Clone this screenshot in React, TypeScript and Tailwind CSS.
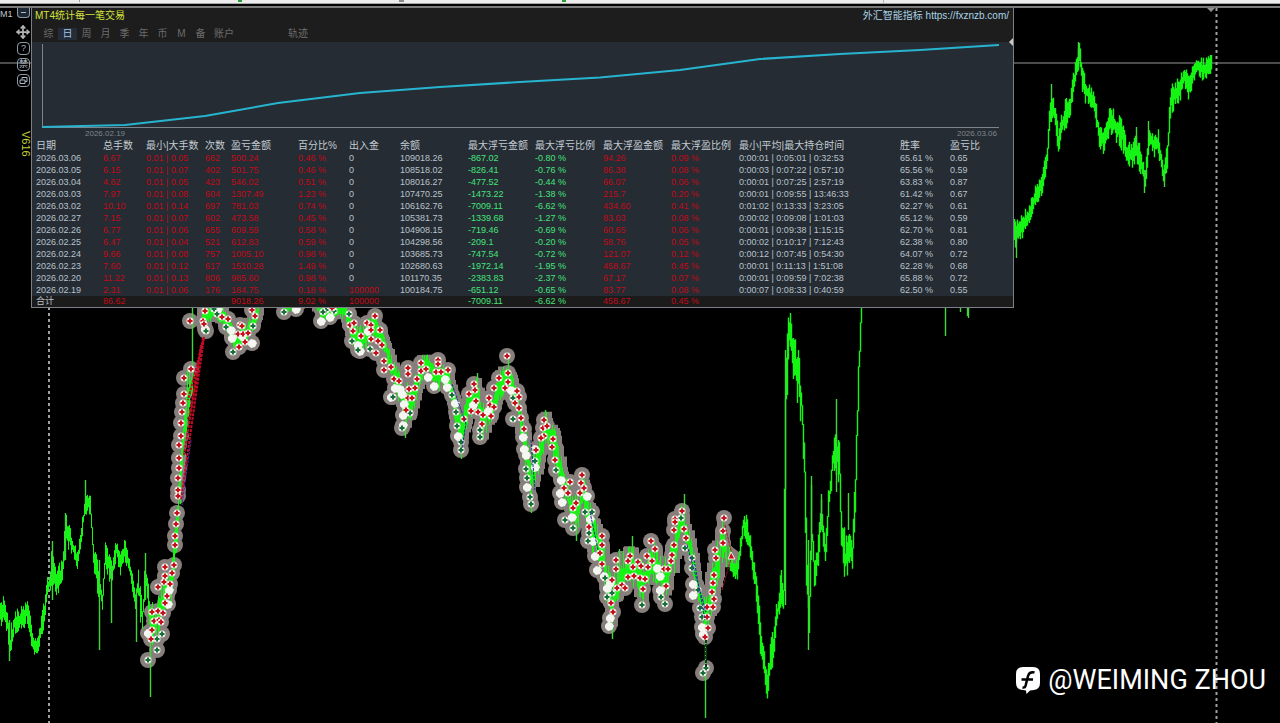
import { Move } from 'lucide-react';
import { useState } from 'react';

// x, top, bottom of the price range
type Band = [number, number, number];

const leftBand: Band[] = [
  [0, 606, 624], [4, 590, 626], [7, 612, 632], [10, 628, 660], [14, 610, 635], [20, 610, 628], [27, 598, 622],
  [31, 620, 645], [34, 638, 655], [38, 634, 650], [42, 612, 635], [46, 583, 605], [50, 565, 590], [52, 543, 582],
  [57, 568, 598], [62, 562, 590], [65, 514, 545], [70, 530, 547], [77, 553, 568], [82, 518, 535], [85, 492, 512],
  [90, 495, 512], [93, 545, 562], [98, 560, 602], [102, 590, 606], [105, 545, 562], [111, 560, 588], [116, 542, 556],
  [120, 556, 572], [124, 540, 555], [130, 562, 578], [135, 590, 612], [138, 565, 600], [142, 600, 640],
  [145, 556, 582], [150, 585, 650], [155, 610, 640], [164, 575, 610], [172, 560, 600], [177, 480, 545],
  [181, 420, 490], [187, 370, 420], [193, 362, 385],
];

const midBand: Band[] = [
  [202, 309, 325], [214, 306, 314], [226, 312, 328], [234, 330, 348], [246, 325, 342], [256, 307, 322], [262, 290, 295],
  [276, 290, 295], [284, 300, 309], [298, 300, 307], [306, 290, 295], [314, 295, 300], [320, 304, 317], [333, 304, 315],
  [345, 304, 316], [352, 320, 345], [362, 330, 348], [372, 312, 337], [382, 322, 348], [390, 355, 370], [398, 372, 398],
  [405, 382, 430], [412, 390, 413], [419, 360, 385], [426, 355, 370], [436, 362, 386], [448, 368, 390],
  [455, 395, 422], [461, 418, 453], [468, 392, 418], [477, 378, 408], [482, 400, 438], [489, 402, 423], [500, 372, 400],
  [507, 364, 390], [516, 388, 408], [523, 420, 448], [531, 455, 504], [538, 440, 472], [546, 414, 438],
  [553, 425, 458], [562, 460, 497], [569, 485, 520], [576, 500, 530], [583, 477, 508], [590, 505, 547],
  [601, 535, 568], [612, 580, 626], [619, 557, 597], [632, 547, 582], [643, 565, 600], [652, 540, 576], [663, 565, 600],
  [674, 530, 570], [681, 506, 525], [690, 535, 558], [697, 570, 598], [705, 600, 637], [714, 555, 606], [722, 518, 560],
  [727, 545, 570],
];

const rightBand: Band[] = [
  [729, 548, 566], [733, 560, 578], [737, 560, 576], [740, 540, 556], [743, 515, 532], [747, 516, 545], [751, 545, 560],
  [756, 572, 600], [760, 612, 655], [764, 645, 682], [767, 668, 700], [770, 645, 680], [774, 620, 650], [778, 590, 622],
  [781, 572, 600], [783, 582, 612], [785, 355, 460], [789, 309, 360], [793, 335, 380], [798, 350, 405], [801, 372, 425],
  [804, 440, 485], [806, 510, 600], [809, 575, 640], [811, 480, 560], [814, 560, 585], [817, 540, 580], [821, 495, 522],
  [825, 545, 564], [828, 492, 525], [832, 448, 475], [835, 436, 466], [839, 440, 486], [841, 510, 550], [845, 535, 588],
  [849, 535, 560], [852, 535, 566], [855, 475, 510], [857, 390, 450], [859, 320, 390], [861, 300, 322], [862, 300, 322],
];

const farBand: Band[] = [
  [1014, 222, 248], [1020, 215, 238], [1028, 208, 225], [1035, 188, 203], [1042, 173, 192], [1047, 140, 165],
  [1050, 88, 125], [1053, 98, 115], [1058, 128, 150], [1064, 104, 130], [1070, 92, 114], [1075, 65, 88], [1079, 44, 62],
  [1083, 72, 97], [1089, 85, 106], [1094, 93, 110], [1098, 116, 144], [1103, 130, 152], [1109, 108, 132],
  [1115, 112, 138], [1122, 122, 148], [1127, 143, 165], [1132, 146, 165], [1136, 132, 158], [1141, 155, 174],
  [1145, 165, 190], [1149, 125, 150], [1154, 136, 154], [1158, 130, 152], [1163, 165, 182], [1167, 140, 168],
  [1170, 88, 116], [1175, 84, 102], [1180, 73, 98], [1184, 68, 82], [1188, 76, 98], [1192, 62, 84], [1196, 58, 71],
  [1203, 60, 78], [1212, 57, 68],
];

// single long wicks
const wicks: Band[] = [
  [9, 620, 661], [52, 541, 600], [65, 513, 560], [85, 480, 510], [99, 560, 650], [111, 565, 623], [136, 590, 642],
  [145, 553, 600], [150, 640, 697], [192, 307, 372], [405, 400, 438], [477, 373, 400], [461, 440, 459], [508, 355, 380],
  [545, 410, 430], [531, 490, 513], [576, 510, 541], [612, 600, 639], [632, 536, 560], [619, 549, 580], [684, 494, 520],
  [705, 630, 718], [785, 350, 605], [808, 540, 650], [811, 476, 560], [836, 399, 492], [821, 494, 530], [848, 493, 530],
  [945, 307, 336], [960, 307, 312], [967, 307, 316], [968, 307, 318], [1016, 230, 258], [1051, 84, 100], [1078, 42, 60],
  [1144, 170, 193], [1164, 170, 187], [1148, 121, 140], [1136, 127, 150],
];

function bandPath(band: Band[]) {
  let seed = 7;
  const rnd = () => {
    seed = (seed * 16807) % 2147483647;
    return seed / 2147483647;
  };
  let d = '';
  let prev = [band[0][1], band[0][2]];
  for (let i = 0; i < band.length - 1; i++) {
    const [x1, t1, b1] = band[i];
    const [x2, t2, b2] = band[i + 1];
    for (let x = x1; x < x2; x++) {
      const k = (x - x1) / (x2 - x1);
      const top = t1 + (t2 - t1) * k;
      const bot = b1 + (b2 - b1) * k;
      const h = bot - top;
      let hi = top - 3 + rnd() * h * 0.5;
      let lo = bot + 3 - rnd() * h * 0.5;
      // keep neighbouring bars joined
      if (hi > prev[1]) hi = prev[1];
      if (lo < prev[0]) lo = prev[0];
      prev = [hi, lo];
      d += `M${x + 0.5} ${hi.toFixed(1)}V${(lo + 1).toFixed(1)}`;
    }
  }
  return d;
}

const buys = `190,321 191,369 184,378 184,394 183,403 182,412 181,423 181,436 179,445 179,458 179,468 178,478 178,490 178,496
177,513 176,524 175,536 175,545 165,567 174,565 165,576 172,573 158,587 164,582 170,584 167,596 165,603 152,612 158,611
163,613 154,621 159,620 161,622 152,630 151,639 203,321 204,324 222,317 228,319 239,347 245,342 238,334 243,334 240,325
242,326 248,333 255,316 252,310 205,311 332,308 350,325 354,323 353,331 361,336 367,323 371,325 375,316 371,330 380,330
378,341 371,339 382,345 376,353 384,361 391,367 384,370 394,379 399,381 409,389 415,388 408,398 412,398 408,368 408,374
417,379 406,410 421,363 421,371 426,369 438,360 438,364 436,372 441,372 448,370 464,419 474,384 469,394 475,390 476,401
471,411 478,412 483,415 482,424 494,388 489,398 490,405 494,407 491,416 499,378 507,356 508,373 508,382 505,388 517,391
519,397 515,403 519,408 521,418 524,429 536,450 544,420 543,428 547,426 544,436 541,438 553,439 552,447 555,460 564,488
570,482 568,493 576,503 573,508 582,475 581,483 584,488 580,493 589,527 602,536 602,545 600,553 602,564 616,560 616,569
612,580 617,588 611,603 613,612 630,556 628,561 633,567 628,577 622,585 625,588 638,562 641,566 634,576 640,578 645,579
643,589 651,541 655,549 647,556 652,561 648,567 664,569 668,569 666,586 674,545 672,555 671,561 675,519 675,522 674,530
682,511 684,529 686,538 707,617 708,628 705,637 715,550 716,558 714,575 713,583 712,592 714,599 707,607 713,607 724,518
723,531 723,543`;

const sells = `162,634 157,639 157,650 148,660 206,331 217,314 226,327 233,352 253,326 214,309 284,312 326,310 334,311
323,312 349,314 352,341 358,350 370,349 393,397 410,413 402,428 452,395 456,412 457,426 461,442 461,450 480,430 480,437
513,398 513,419 535,461 526,469 527,478 530,497 531,504 556,470 565,520 573,528 585,512 592,512 589,533 588,541 605,578
612,593 607,597 642,605 661,597 665,604 681,518 685,548 692,558 692,568 698,590 700,608 702,617 706,668 703,673`;

const closed = `169,590 168,604 148,633 205,329 231,330 232,338 252,343 218,309 296,309 321,321 330,317 358,345 360,351 395,388
391,397 402,394 403,415 403,425 428,377 434,386 445,379 447,387 455,403 458,436 473,405 511,390 523,437 524,449 526,455
535,449 535,467 527,487 561,480 560,493 562,502 572,517 587,496 590,519 593,541 595,556 597,570 604,576 610,583 607,588
610,618 609,626 657,568 660,576 660,590 693,584 693,595 702,627 703,634 404,404 488,411 368,331 400,389 242,336`;

const points = (s: string) => s.split(/\s+/).map(p => p.split(',').map(Number));
const buyPts = points(buys);
const sellPts = points(sells);
const closedPts = points(closed);

const tabs = ['综', '日', '周', '月', '季', '年', '币', 'M', '备'];

const columns = ['日期', '总手数', '最小|大手数', '次数', '盈亏金额', '百分比%', '出入金', '余额', '最大浮亏金额', '最大浮亏比例', '最大浮盈金额', '最大浮盈比例', '最小|平均|最大持仓时间', '胜率', '盈亏比'];

const rows = [
  ['2026.03.06', '6.67', '0.01 | 0.05', '662', '500.24', '0.46 %', '0', '109018.26', '-867.02', '-0.80 %', '94.26', '0.09 %', '0:00:01 | 0:05:01 | 0:32:53', '65.61 %', '0.65'],
  ['2026.03.05', '6.15', '0.01 | 0.07', '402', '501.75', '0.46 %', '0', '108518.02', '-826.41', '-0.76 %', '86.38', '0.08 %', '0:00:03 | 0:07:22 | 0:57:10', '65.56 %', '0.59'],
  ['2026.03.04', '4.62', '0.01 | 0.05', '423', '546.02', '0.51 %', '0', '108016.27', '-477.52', '-0.44 %', '66.07', '0.06 %', '0:00:01 | 0:07:25 | 2:57:19', '63.83 %', '0.87'],
  ['2026.03.03', '7.97', '0.01 | 0.08', '604', '1307.49', '1.23 %', '0', '107470.25', '-1473.22', '-1.38 %', '215.7', '0.20 %', '0:00:01 | 0:09:55 | 13:46:33', '61.42 %', '0.67'],
  ['2026.03.02', '10.10', '0.01 | 0.14', '697', '781.03', '0.74 %', '0', '106162.76', '-7009.11', '-6.62 %', '434.60', '0.41 %', '0:01:02 | 0:13:33 | 3:23:05', '62.27 %', '0.61'],
  ['2026.02.27', '7.15', '0.01 | 0.07', '602', '473.58', '0.45 %', '0', '105381.73', '-1339.68', '-1.27 %', '83.03', '0.08 %', '0:00:02 | 0:09:08 | 1:01:03', '65.12 %', '0.59'],
  ['2026.02.26', '6.77', '0.01 | 0.06', '655', '609.59', '0.58 %', '0', '104908.15', '-719.46', '-0.69 %', '60.65', '0.06 %', '0:00:01 | 0:09:38 | 1:15:15', '62.70 %', '0.81'],
  ['2026.02.25', '6.47', '0.01 | 0.04', '521', '612.83', '0.59 %', '0', '104298.56', '-209.1', '-0.20 %', '58.76', '0.05 %', '0:00:02 | 0:10:17 | 7:12:43', '62.38 %', '0.80'],
  ['2026.02.24', '9.66', '0.01 | 0.08', '757', '1005.10', '0.98 %', '0', '103685.73', '-747.54', '-0.72 %', '121.07', '0.12 %', '0:00:12 | 0:07:45 | 0:54:30', '64.07 %', '0.72'],
  ['2026.02.23', '7.60', '0.01 | 0.12', '617', '1510.28', '1.49 %', '0', '102680.63', '-1972.14', '-1.95 %', '458.67', '0.45 %', '0:00:01 | 0:11:13 | 1:51:08', '62.28 %', '0.68'],
  ['2026.02.20', '11.22', '0.01 | 0.13', '806', '985.60', '0.98 %', '0', '101170.35', '-2383.83', '-2.37 %', '67.17', '0.07 %', '0:00:01 | 0:09:59 | 7:02:38', '65.88 %', '0.72'],
  ['2026.02.19', '2.31', '0.01 | 0.06', '176', '184.75', '0.18 %', '100000', '100184.75', '-651.12', '-0.65 %', '83.77', '0.08 %', '0:00:07 | 0:08:33 | 0:40:59', '62.50 %', '0.55'],
  ['合计', '86.62', '', '', '9018.26', '9.02 %', '100000', '', '-7009.11', '-6.62 %', '458.67', '0.45 %', '', '', ''],
];

const redCols = [1, 2, 3, 4, 5, 10, 11];

function cellColor(col: number, value: string) {
  if (redCols.includes(col) || (col === 6 && value !== '0')) return 'text-[#c00a19]';
  if (col === 8 || col === 9) return 'text-[#45e27b]';
  return 'text-[#b9c2cb]';
}

function Marker({ x, y, color }: { x: number; y: number; color: string }) {
  return (
    <g>
      <circle cx={x} cy={y} r="3.5" fill="#f1efe8" />
      <path d={`M${x - 2.5} ${y}H${x + 2.5}M${x} ${y - 2.5}V${y + 2.5}`} stroke={color} strokeWidth="2" />
    </g>
  );
}

function PriceChart() {
  return (
    <svg viewBox="0 0 1280 723" preserveAspectRatio="xMinYMin slice" className="absolute inset-0 w-full h-full" role="img" aria-label="价格走势">
      <path d="M0 63H1280" stroke="#4c4c4c" strokeWidth="2" />
      <path d="M49 307V723M1216.5 8V723" stroke="#a0a0a0" strokeWidth="2" strokeDasharray="3 3" />
      <path d="M1206 7h10l-5 5z" fill="#8f8f8f" />

      {/* trade halos */}
      <g fill="#867f7c">
        <path d={bandPath(midBand)} stroke="#867f7c" strokeWidth="11" />
        {[...buyPts, ...sellPts, ...closedPts].map(([x, y], i) => <circle key={i} cx={x} cy={y} r="8" />)}
        <path d="M731 546l9 7-2 12-9-2z" />
      </g>

      <g stroke="#14f514" strokeWidth="1.4" fill="none">
        <path d={bandPath(leftBand)} strokeWidth="1" />
        <path d={bandPath(midBand)} strokeWidth="1" />
        <path d={bandPath(rightBand)} />
        <path d={bandPath(farBand)} />
        <path d={wicks.map(([x, a, b]) => `M${x + 0.5} ${a}V${b}`).join('')} stroke="#3fd63a" />
      </g>

      {closedPts.map(([x, y], i) => <path key={i} d={`M${x - 4} ${y - 1}l3-3 4 1 2 3-2 4-4 1-3-3z`} fill="#f4f6f2" />)}
      {sellPts.map(([x, y], i) => <Marker key={i} x={x} y={y} color="#14713a" />)}
      {buyPts.map(([x, y], i) => <Marker key={i} x={x} y={y} color="#c8101c" />)}

      {/* order links */}
      <g fill="none" strokeDasharray="3 1">
        <path d="M204 338L181 500M203 338L184 455M201 345L189 420M204 337L188 400" stroke="#c30a26" strokeWidth="2" />
        <path d="M191 440L182 505" stroke="#5a2a9c" strokeWidth="1" />
        <path d="M452 384L466 424L462 448M531 440L535 490M590 512L598 550M687 545L706 612L701 606M694 560L705 620" stroke="#1c2f8e" strokeWidth="1" />
        <path d="M706 640V668" stroke="#0b3a1d" strokeWidth="2" />
        <path d="M725 525L732 555L722 590" stroke="#a81226" strokeWidth="1" />
      </g>
      <path d="M731 552l4 7h-7z" fill="#c8101c" stroke="#f4f2ee" />
    </svg>
  );
}

function BalanceCurve() {
  return (
    <svg viewBox="0 0 981 86" preserveAspectRatio="none" className="block w-full h-[86px]" role="img" aria-label="余额曲线">
      <path d="M10.5 2V85.500H967" fill="none" stroke="#7d858c" vectorEffect="non-scaling-stroke" />
      <path d="M10 85L30 84.500L93 83L173 74L246 61L328 51L408 45L488 40L568 35.500L648 28L728 17L808 12L888 8L967 3"
        fill="none" stroke="#27b4d0" strokeWidth="2" vectorEffect="non-scaling-stroke" />
    </svg>
  );
}

const railButton = 'w-[13px] h-[13px] flex items-center justify-center rounded-sm border border-[#8e9aa8] text-[#aeb9c6]';

function Rail() {
  return (
    <div className="w-[31px] shrink-0 relative text-[9px] text-[#c4c4c4]">
      <span className="absolute left-0 top-0">M1</span>
      <div className="flex flex-col items-end gap-[3px] pr-[1px]">
        <button aria-label="最小化" className="w-[13px] h-[10px] flex items-center justify-center rounded-b-sm border border-t-0 border-[#8e9aa8] bg-[#1d2733]">
          <span className="w-[5px] h-px bg-[#aeb9c6]" />
        </button>
        <button aria-label="移动" className="mt-[4px] text-[#b4b4b4]"><Move className="w-[14px] h-[14px]" strokeWidth={3} /></button>
        <button aria-label="帮助" className={railButton}>?</button>
        <button aria-label="禁止" className={railButton}>禁</button>
        <button aria-label="窗口" className={railButton}>
          <svg viewBox="0 0 9 9" className="w-[9px] h-[9px]" fill="none" stroke="currentColor">
            <path d="M3 3.500V1.500H8V5.500H6M1 4H6V7.500H1z" />
          </svg>
        </button>
      </div>
      <span className="absolute right-0 top-[123px] leading-[11px] text-[11px] text-[#c3cf3a] [writing-mode:vertical-rl]">V616</span>
    </div>
  );
}

export default function App() {
  const [active, setActive] = useState('日');

  return (
    <div className="relative min-h-screen overflow-hidden bg-black font-['Liberation_Sans','Noto_Sans_CJK_SC',sans-serif]">
      <PriceChart />

      {/* toolbar edge */}
      <div className="relative h-[8px] bg-black border-b-2 border-[#7a7a7a]">
        <div className="flex items-start justify-around h-[4px] bg-[#ececec] border-b border-[#a5a5a5]">
          <span className="w-px h-[2px] bg-[#9a9a9a]" />
          <span className="w-[4px] h-[2px] bg-[#2c9a35]" />
          <span className="w-[5px] h-[2px] bg-[#8a8a8a]" />
          <span className="w-[4px] h-[2px] bg-[#2c9a35]" />
          <span className="w-px" />
          <span className="w-px h-[3px] bg-[#b5b5b5]" />
          <span className="w-px" />
          <span className="w-px" />
        </div>
      </div>

      <div className="relative flex items-start">
        <Rail />
        <section className="relative flex-1 min-w-0 mr-[266px] border border-t-0 border-[#7b8086] bg-[#252c33]">
          <header className="bg-[#1d1d1d] pb-px">
            <div className="flex justify-between items-center h-[15px] pl-[3px] pr-[4px] text-[10px]">
              <h1 className="text-[#d5e23c]">MT4统计每一笔交易</h1>
              <a href="https://fxznzb.com/" className="text-[#a9d3e6]">外汇智能指标 https://fxznzb.com/</a>
            </div>
            <nav className="flex items-center h-[18px] pt-[3px] pl-[7px] text-[10px] text-[#6c6c6c]">
              {tabs.map(t => (
                <button key={t} onClick={() => setActive(t)}
                  className={`w-[19px] h-[12px] leading-[12px] ${active === t ? 'text-[#a3c4e8] bg-[#232c38]' : ''}`}>
                  {t}
                </button>
              ))}
              <button className="ml-[4px]">账户</button>
              <button className="ml-[54px]">轨迹</button>
            </nav>
          </header>
          <svg viewBox="0 0 4 8" className="absolute right-0 top-[30px] w-[4px] h-[8px]" aria-hidden="true">
            <path d="M4 0V8L0 4z" fill="#c9c9c9" />
          </svg>

          <BalanceCurve />
          <div className="flex justify-between h-[12px] leading-[11px] pl-[53px] pr-[16px] text-[8px] text-[#7f868d]">
            <span>2026.02.19</span>
            <span>2026.03.06</span>
          </div>

          <table className="w-full table-fixed border-collapse text-[9px] leading-[12px] text-left whitespace-nowrap">
            <colgroup>
              <col className="w-[71px]" />
              <col className="w-[43px]" />
              <col className="w-[59px]" />
              <col className="w-[26px]" />
              <col className="w-[67px]" />
              <col className="w-[51px]" />
              <col className="w-[51px]" />
              <col className="w-[68px]" />
              <col className="w-[67px]" />
              <col className="w-[68px]" />
              <col className="w-[68px]" />
              <col className="w-[68px]" />
              <col className="w-[161px]" />
              <col className="w-[50px]" />
              <col />
            </colgroup>
            <thead>
              <tr className="h-[12px] text-[10px] text-[#c3cbd2]">
                {columns.map(c => <th key={c} className="p-0 font-normal first:pl-[4px]">{c}</th>)}
              </tr>
            </thead>
            <tbody>
              {rows.map(row => (
                <tr key={row[0]} className="h-[12px] last:h-[11px] last:leading-[11px] last:bg-[#1b1b1b]">
                  {row.map((v, i) => <td key={i} className={`p-0 first:pl-[4px] ${cellColor(i, v)}`}>{v}</td>)}
                </tr>
              ))}
            </tbody>
          </table>
        </section>
      </div>

      <div className="absolute right-[14px] bottom-[27px] flex items-center gap-[7px] text-white">
        <svg viewBox="0 0 26 28" className="w-[26px] h-[28px]">
          <path d="M8 1h10q7 0 7 7v9q0 6-6 7l-4 .5-3.500 3.500-.5-3.500L8 24q-7 0-7-7V8q0-7 7-7z" fill="#fff" />
          <path d="M19.500 6.500q-5-1.500-6.500 3.500L10.500 20q-.5 2-3 1.500M6.500 13.500H18" fill="none" stroke="#000" strokeWidth="2.500" />
        </svg>
        <span className="font-['Roboto',sans-serif] text-[27px] leading-[32px]">@WEIMING ZHOU</span>
      </div>
    </div>
  );
}
